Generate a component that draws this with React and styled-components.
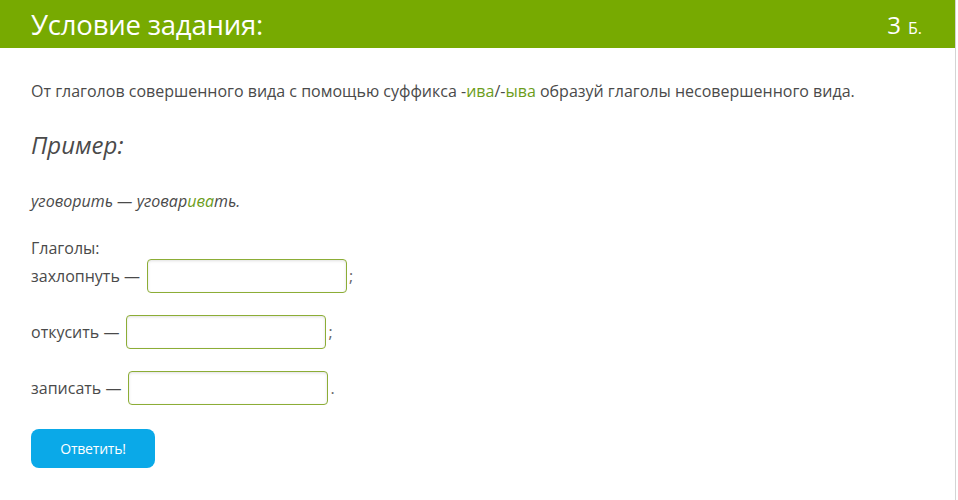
import React from 'react';
import styled, { createGlobalStyle } from 'styled-components';

const GlobalStyle = createGlobalStyle`
  html, body {
    margin: 0;
    padding: 0;
    background: #fff;
  }
  body {
    font-family: "Open Sans", "Noto Sans", sans-serif;
    color: #4a4a4a;
  }
`;

const Page = styled.div`
  width: 956px;
  min-height: 500px;
  border-right: 1px solid #d4d4d4;
  box-sizing: border-box;
`;

const Header = styled.div`
  height: 48px;
  background: #77aa01;
  color: #fff;
  display: flex;
  align-items: center;
  justify-content: space-between;
  padding: 0 33px 0 31px;
`;

const Title = styled.h1`
  margin: 0;
  font-size: 27.5px;
  font-weight: 400;
  letter-spacing: -0.2px;
`;

const Points = styled.div`
  font-size: 24px;
  display: flex;
  align-items: baseline;
  gap: 7px;
`;

const PointsUnit = styled.span`
  font-size: 16px;
`;

const Content = styled.div`
  padding: 32px 31px 0;
`;

const Text = styled.p`
  margin: ${p => p.$mt || 0}px 0 0;
  font-size: 16px;
  line-height: 22px;
  font-style: ${p => (p.$italic ? 'italic' : 'normal')};
`;

const Green = styled.span`
  color: #6c9d1b;
`;

const Subtitle = styled.h2`
  margin: 28px 0 0;
  font-size: 24px;
  line-height: 30px;
  font-weight: 400;
  font-style: italic;
  color: #4a4a4a;
`;

const Rows = styled.div`
  display: flex;
  flex-direction: column;
  gap: 22px;
`;

const Row = styled.div`
  display: flex;
  align-items: center;
  height: 34px;
  font-size: 16px;
`;

const Label = styled.span`
  margin-right: 7px;
`;

const Field = styled.input`
  width: 200px;
  height: 34px;
  box-sizing: border-box;
  border: 1px solid #8cad36;
  border-radius: 4px;
  box-shadow: inset 0 1px 3px rgba(0, 0, 0, 0.12);
  background: #fff;
  font: inherit;
  padding: 0 8px;
  outline: none;
`;

const Punct = styled.span`
  margin-left: 2px;
  color: #666;
`;

const Button = styled.button`
  margin-top: 24px;
  width: 124px;
  height: 39px;
  border: none;
  border-radius: 8px;
  background: #0aa9e8;
  color: #fff;
  font-family: "Open Sans", sans-serif;
  font-size: 14px;
  letter-spacing: -0.2px;
  cursor: pointer;
`;

const verbs = [
  { word: 'захлопнуть', end: ';' },
  { word: 'откусить', end: ';' },
  { word: 'записать', end: '.' },
];

export default function App() {
  return (
    <Page>
      <GlobalStyle />
      <Header>
        <Title>Условие задания:</Title>
        <Points>
          3<PointsUnit>Б.</PointsUnit>
        </Points>
      </Header>
      <Content>
        <Text>
          От глаголов совершенного вида с помощью суффикса -<Green>ива</Green>/-<Green>ыва</Green> образуй
          глаголы несовершенного вида.
        </Text>
        <Subtitle>Пример:</Subtitle>
        <Text $italic $mt={30}>
          уговорить — уговар<Green>ива</Green>ть.
        </Text>
        <Text $mt={25}>Глаголы:</Text>
        <Rows>
          {verbs.map(v => (
            <Row key={v.word}>
              <Label>{v.word} —</Label>
              <Field type="text" />
              <Punct>{v.end}</Punct>
            </Row>
          ))}
        </Rows>
        <Button>Ответить!</Button>
      </Content>
    </Page>
  );
}
